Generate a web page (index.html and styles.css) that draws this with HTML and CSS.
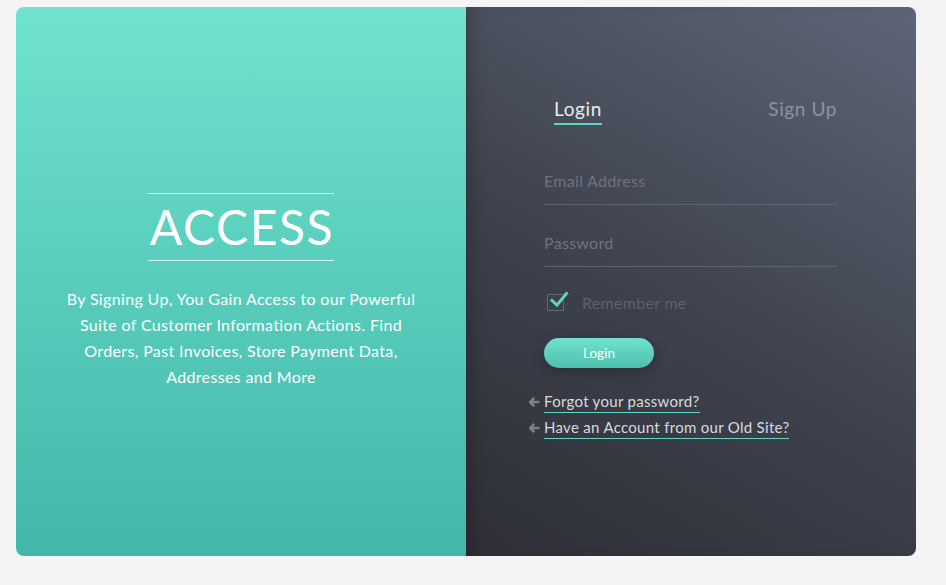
FILE: index.html
```html
<!DOCTYPE html>
<html>
<head>
<meta charset="utf-8">
<link rel="stylesheet" href="styles.css">
</head>
<body>
<div class="card">
  <section class="intro">
    <div class="intro-inner">
      <h1 class="title">ACCESS</h1>
      <p class="blurb">By Signing Up, You Gain Access to our Powerful Suite of Customer Information Actions. Find Orders, Past Invoices, Store Payment Data, Addresses and More</p>
    </div>
  </section>
  <section class="auth">
    <div class="auth-inner">
      <nav class="tabs">
        <span class="tab active">Login</span>
        <span class="tab">Sign Up</span>
      </nav>
      <div class="field"><span class="placeholder">Email Address</span></div>
      <div class="field"><span class="placeholder">Password</span></div>
      <label class="remember">
        <span class="box">
          <svg width="20" height="18" viewBox="0 0 20 18"><path d="M3 9.5 L8 14 L17.5 2.5" fill="none" stroke="#5fd6c0" stroke-width="3" stroke-linecap="square"/></svg>
        </span>
        <span class="remember-text">Remember me</span>
      </label>
      <button class="btn">Login</button>
      <div class="links">
        <a class="link"><svg class="arrow" width="11" height="10" viewBox="0 0 11 10"><path d="M5.2 0.8 L1.2 5 L5.2 9.2 M1.6 5 H10.5" fill="none" stroke="#7b808c" stroke-width="2.6"/></svg><span>Forgot your password?</span></a>
        <a class="link"><svg class="arrow" width="11" height="10" viewBox="0 0 11 10"><path d="M5.2 0.8 L1.2 5 L5.2 9.2 M1.6 5 H10.5" fill="none" stroke="#7b808c" stroke-width="2.6"/></svg><span>Have an Account from our Old Site?</span></a>
      </div>
    </div>
  </section>
</div>
</body>
</html>
```

FILE: styles.css
```css
html, body {
  margin: 0;
  padding: 0;
}
body {
  background: #f4f4f4;
  font-family: "Lato", "Open Sans", sans-serif;
  width: 946px;
  height: 585px;
  overflow: hidden;
}
.card {
  margin: 7px 0 0 16px;
  width: 900px;
  height: 549px;
  display: flex;
  border-radius: 8px;
  overflow: hidden;
}
.intro {
  width: 450px;
  background: linear-gradient(180deg, #6fe3cd 0%, #42b7aa 100%);
  display: flex;
  align-items: center;
  justify-content: center;
}
.intro-inner {
  display: flex;
  flex-direction: column;
  align-items: center;
  margin-top: 20px;
}
.title {
  margin: 0;
  color: #fff;
  font-weight: 400;
  font-size: 48px;
  letter-spacing: 1.6px;
  line-height: 66px;
  border-top: 1px solid rgba(255,255,255,0.75);
  border-bottom: 1px solid rgba(255,255,255,0.75);
  padding: 0 0 0 2px;
}
.blurb {
  margin: 25px 0 0;
  width: 362px;
  text-align: center;
  color: #fff;
  font-size: 16px;
  letter-spacing: 0.35px;
  line-height: 26px;
}
.auth {
  width: 450px;
  background: linear-gradient(30deg, #2e2f37 0%, #3e424d 45%, #5e6577 100%);
  box-shadow: inset 14px 0 18px -10px rgba(0,0,0,0.25);
  display: flex;
  justify-content: flex-start;
}
.auth-inner {
  margin-left: 78px;
  width: 293px;
  display: flex;
  flex-direction: column;
  padding-top: 88px;
}
.tabs {
  display: flex;
  justify-content: space-between;
  padding-left: 10px;
}
.tab {
  font-size: 19px;
  letter-spacing: 0.6px;
  color: #8e929c;
  line-height: 28px;
  padding-bottom: 0;
}
.tab.active {
  color: #e8eaee;
  border-bottom: 2px solid #5fd6c0;
}
.field {
  margin-top: 31px;
  height: 48px;
  border-bottom: 1px solid #5b6473;
  display: flex;
  align-items: center;
}
.field + .field {
  margin-top: 13px;
}
.placeholder {
  font-size: 16px;
  letter-spacing: 0.3px;
  color: #6f737d;
}
.remember {
  display: flex;
  align-items: center;
  margin-top: 26px;
}
.box {
  width: 15px;
  height: 15px;
  border: 1px solid #646873;
  margin-left: 3px;
  position: relative;
}
.box svg {
  position: absolute;
  left: 1px;
  top: -4px;
}
.remember-text {
  margin-left: 18px;
  font-size: 16px;
  letter-spacing: 0.3px;
  color: #5d616b;
}
.btn {
  margin-top: 26px;
  width: 110px;
  height: 30px;
  border: none;
  border-radius: 15px;
  background: linear-gradient(180deg, #6fe3cd 0%, #4cbfae 100%);
  color: #fff;
  font-family: "Lato", "Open Sans", sans-serif;
  font-size: 13.5px;
  box-shadow: 0 4px 14px rgba(0,0,0,0.25);
  padding: 0;
}
.links {
  margin-top: 23px;
  display: flex;
  flex-direction: column;
  gap: 4px;
}
.link {
  display: flex;
  align-items: center;
  margin-left: -15px;
  color: #d8dadf;
  font-size: 15px;
  letter-spacing: 0.3px;
  line-height: 20px;
}
.arrow {
  margin-right: 4px;
}
.link span {
  border-bottom: 1px solid #5fd6c0;
  padding-bottom: 1px;
}
```
